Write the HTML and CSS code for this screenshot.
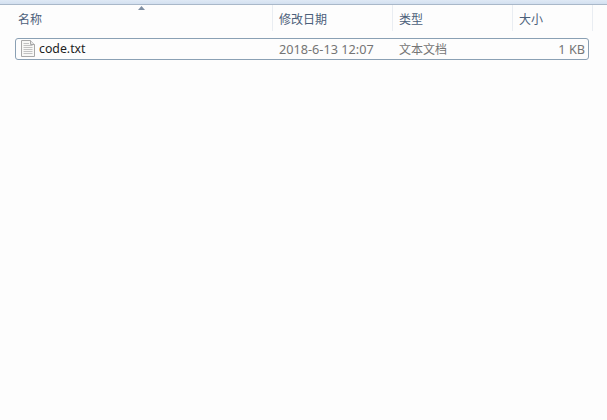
FILE: index.html
```html
<!DOCTYPE html>
<html lang="zh-CN">
<head>
    <meta charset="UTF-8">
    <meta name="viewport" content="width=device-width, initial-scale=1.0">
    <title>code</title>
    <link rel="stylesheet" href="styles.css">
</head>
<body>
    <div class="topbar"></div>
    <div class="header">
        <div class="col col-name">
            名称
            <svg class="sort-arrow" width="7" height="4" viewBox="0 0 7 4"><path d="M0 4 L3.5 0 L7 4 Z" fill="#7f8fa3"/></svg>
        </div>
        <div class="col col-date">修改日期</div>
        <div class="col col-type">类型</div>
        <div class="col col-size">大小</div>
    </div>
    <div class="row">
        <div class="cell-name">
            <svg class="file-icon" width="14" height="17" viewBox="0 0 14 17">
                <path d="M0.5 0.5 H9.5 L13.5 4.5 V16.5 H0.5 Z" fill="#f8f8f6" stroke="#a8a8a8"/>
                <path d="M9.5 0.5 V4.5 H13.5" fill="#e6e6e6" stroke="#a8a8a8"/>
                <path d="M2.5 3.5 H8 M2.5 5.5 H11.5 M2.5 7.5 H11.5 M2.5 9.5 H11.5 M2.5 11.5 H11.5 M2.5 13.5 H11.5" stroke="#c2c2c2"/>
            </svg>
            <span class="file-name">code.txt</span>
        </div>
        <div class="cell-date">2018-6-13 12:07</div>
        <div class="cell-type">文本文档</div>
        <div class="cell-size">1 KB</div>
    </div>
</body>
</html>
```

FILE: styles.css
```css
body {
    margin: 0;
    height: 420px;
    overflow: hidden;
    background-color: #fdfdfd;
    font-family: "Noto Sans", "Noto Sans CJK SC", sans-serif;
    font-size: 12px;
}

.topbar {
    height: 4px;
    background: linear-gradient(#dfe9f5, #d3e0f0);
    border-bottom: 1px solid #a9b8c9;
}

.header {
    display: flex;
    height: 26px;
    margin-bottom: 7px;
    color: #4c607a;
}

.col {
    box-sizing: border-box;
    width: 120px;
    padding: 6px 0 0 6px;
    border-right: 1px solid #e9edf2;
    line-height: 17px;
}

.col-name {
    position: relative;
    width: 273px;
    padding-left: 18px;
}

.sort-arrow {
    position: absolute;
    top: 1px;
    left: 138px;
}

.col-size {
    width: 80px;
}

.row {
    display: flex;
    align-items: center;
    box-sizing: border-box;
    width: 574px;
    height: 22px;
    margin-left: 15px;
    padding-bottom: 1px;
    border: 1px solid #8aa0b4;
    border-radius: 3px;
    color: #757575;
}

.cell-name {
    display: flex;
    align-items: center;
    gap: 4px;
    width: 263px;
    padding-left: 5px;
    box-sizing: border-box;
    color: #1e1e1e;
}

.file-name {
    font-size: 12.3px;
}

.file-icon {
    flex-shrink: 0;
}

.cell-date {
    width: 120px;
    font-size: 12.7px;
}

.cell-type {
    width: 100px;
}

.cell-size {
    width: 86px;
    text-align: right;
    font-size: 12.7px;
}
```
